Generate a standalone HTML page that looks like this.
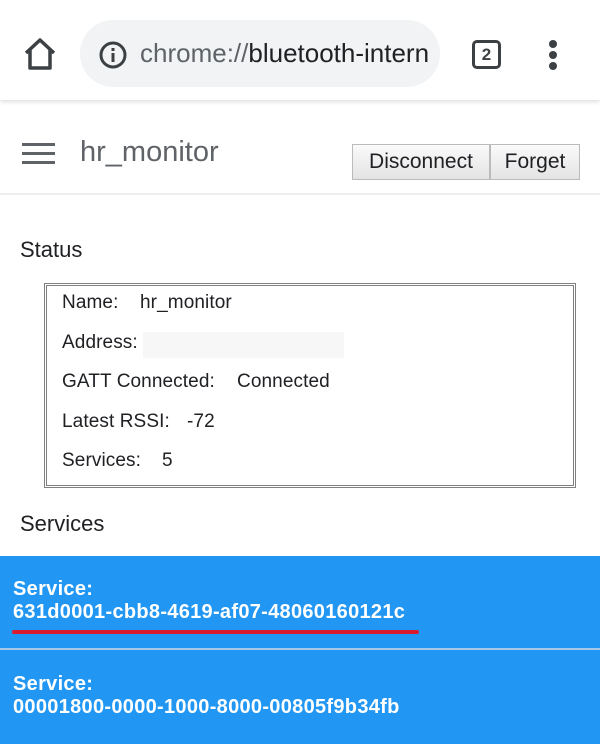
<!DOCTYPE html>
<html><head><meta charset="utf-8"><style>
*{margin:0;padding:0;box-sizing:border-box}
body{width:600px;height:744px;overflow:hidden;background:#fff;font-family:"Liberation Sans",sans-serif;position:relative;color:#202124}
.a{position:absolute;white-space:nowrap}
.r{font-size:19px;letter-spacing:.1px}
</style></head><body>
<div class="a" style="left:0;top:0;width:600px;height:100px;background:#fff;box-shadow:0 2px 4px rgba(0,0,0,.12)"></div>
<svg class="a" style="left:22px;top:36px" width="36" height="36" viewBox="0 0 36 36"><path d="M4 17 L18 4 L32 17 M8 14 V32 H28 V14" fill="none" stroke="#3c4043" stroke-width="3.5" stroke-linejoin="round"/></svg>
<div class="a" style="left:80px;top:20px;width:360px;height:67px;border-radius:34px;background:#f1f3f4"></div>
<svg class="a" style="left:98px;top:40px" width="30" height="30" viewBox="0 0 30 30"><circle cx="15" cy="15" r="12" fill="none" stroke="#3c4043" stroke-width="3"/><rect x="13.5" y="13" width="3" height="9" fill="#3c4043"/><rect x="13.5" y="8" width="3" height="3" fill="#3c4043"/></svg>
<div class="a" style="left:140px;top:38px;font-size:26px;color:#5f6368;width:288px;overflow:hidden">chrome://<span style="color:#202124">bluetooth-internals</span></div>
<div class="a" style="left:472px;top:40px;width:29px;height:29px;border:3px solid #3c4043;border-radius:5px;font-size:17px;font-weight:bold;text-align:center;line-height:23px;color:#3c4043">2</div>
<div class="a" style="left:549px;top:40px;width:8px;height:8px;border-radius:50%;background:#3c4043"></div>
<div class="a" style="left:549px;top:51px;width:8px;height:8px;border-radius:50%;background:#3c4043"></div>
<div class="a" style="left:549px;top:62px;width:8px;height:8px;border-radius:50%;background:#3c4043"></div>
<div class="a" style="left:22px;top:143px;width:33px;height:3px;background:#5f6368"></div>
<div class="a" style="left:22px;top:152px;width:33px;height:3px;background:#5f6368"></div>
<div class="a" style="left:22px;top:161px;width:33px;height:3px;background:#5f6368"></div>
<div class="a" style="left:80px;top:136px;font-size:29px;color:#5f6368">hr_monitor</div>
<div class="a" style="left:352px;top:144px;width:138px;height:36px;border:1px solid #bbb;background:linear-gradient(#fafafa,#e4e4e4);font-size:21px;text-align:center;line-height:34px">Disconnect</div>
<div class="a" style="left:490px;top:144px;width:90px;height:36px;border:1px solid #bbb;background:linear-gradient(#fafafa,#e4e4e4);font-size:21px;text-align:center;line-height:34px">Forget</div>
<div class="a" style="left:0;top:193px;width:600px;height:2px;background:#eee"></div>
<div class="a" style="left:20px;top:237px;font-size:22px">Status</div>
<div class="a" style="left:44px;top:283px;width:532px;height:205px;border:3px double #808080;border-width:3px;"></div>
<div class="a r" style="left:62px;top:292px">Name:<span style="position:absolute;left:78px">hr_monitor</span></div>
<div class="a r" style="left:62px;top:332px">Address:</div>
<div class="a" style="left:143px;top:332px;width:201px;height:26px;background:#f7f7f7"></div>
<div class="a r" style="left:62px;top:371px">GATT Connected:<span style="position:absolute;left:175px">Connected</span></div>
<div class="a r" style="left:62px;top:411px">Latest RSSI:<span style="position:absolute;left:125px">-72</span></div>
<div class="a r" style="left:62px;top:450px">Services:<span style="position:absolute;left:100px">5</span></div>
<div class="a" style="left:20px;top:511px;font-size:22px">Services</div>
<div class="a" style="left:0;top:556px;width:600px;height:188px;background:#2196f3"></div>
<div class="a" style="left:0;top:648px;width:600px;height:2px;background:#a9c9e8"></div>
<div class="a" style="left:13px;top:578px;font-size:20px;letter-spacing:.3px;font-weight:bold;color:#fff;line-height:23px">Service:<br>631d0001-cbb8-4619-af07-48060160121c</div>
<div class="a" style="left:12px;top:630px;width:407px;height:4px;border-radius:2px;background:#d81b30"></div>
<div class="a" style="left:13px;top:673px;font-size:20px;letter-spacing:.3px;font-weight:bold;color:#fff;line-height:23px">Service:<br>00001800-0000-1000-8000-00805f9b34fb</div>
</body></html>
